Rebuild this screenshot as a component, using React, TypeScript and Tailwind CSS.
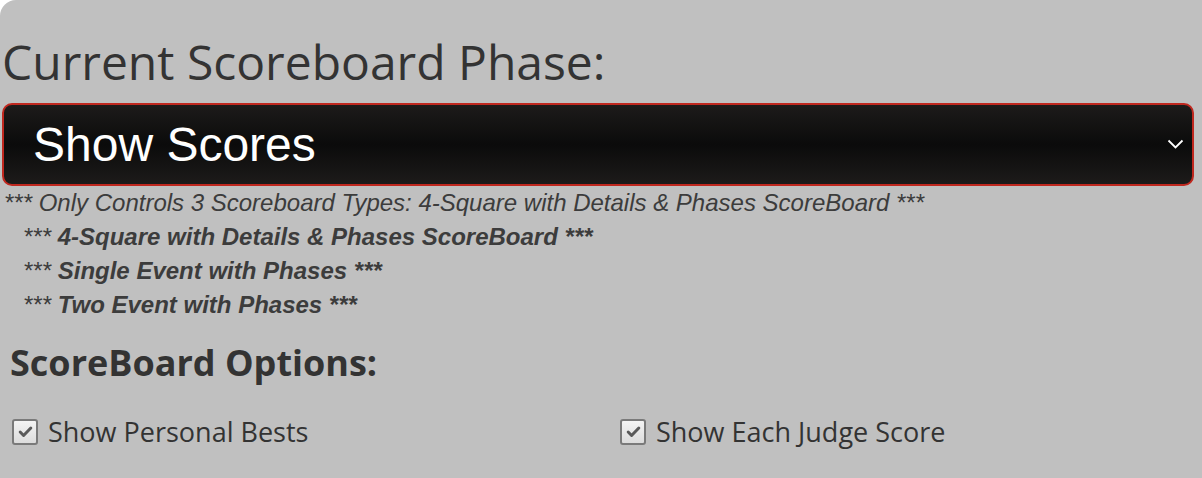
import React from "react";

function Check({ label }: { label: string }) {
  return (
    <label className="flex items-center gap-[10px]">
      <span className="flex h-[26px] w-[26px] items-center justify-center rounded-[3px] border-2 border-[#7a7a7a] bg-linear-to-b from-[#f4f4f4] to-[#dcdcdc]">
        <svg viewBox="0 0 16 16" className="h-[17px] w-[17px]">
          <path d="M3 8.5l3.2 3.2 6.8-7" fill="none" stroke="#5a5a5a" strokeWidth="2.8" strokeLinecap="round" strokeLinejoin="round" />
        </svg>
      </span>
      <span className="text-[27px] leading-none text-[#333]">{label}</span>
    </label>
  );
}

export default function App() {
  return (
    <div className="h-[478px] w-[1202px] overflow-hidden bg-white">
      <div className="h-full w-full rounded-tl-[16px] bg-[#c0c0c0] pt-[34px] font-['Open_Sans',sans-serif]">
        <h1 className="pl-[2px] text-[48px] leading-[56px] text-[#333]">Current Scoreboard Phase:</h1>
        <div className="mx-[2px] mt-[13px] flex h-[83px] w-[1192px] items-center justify-between rounded-[10px] border-2 border-[#c0281f] bg-linear-to-b from-[#1d1b1a] via-[#0b0b0b] to-[#1d1b1a] pl-[29px] pr-[8px] font-['Liberation_Sans',Arial,sans-serif] text-[48px] text-white">
          <span>Show Scores</span>
          <svg width="17" height="11" viewBox="0 0 17 11" className="shrink-0">
            <path d="M1.5 1.5l7 7 7-7" fill="none" stroke="#fff" strokeWidth="1.8" />
          </svg>
        </div>
        <div className="font-['Liberation_Sans',Arial,sans-serif] text-[24px] italic leading-[34px] text-[#3c3c3c]">
          <p className="pl-[4px]">*** Only Controls 3 Scoreboard Types: 4-Square with Details &amp; Phases ScoreBoard ***</p>
          <div className="pl-[23px] font-bold">
            <p>
              <span className="font-normal">***</span> 4-Square with Details &amp; Phases ScoreBoard ***
            </p>
            <p>
              <span className="font-normal">***</span> Single Event with Phases ***
            </p>
            <p>
              <span className="font-normal">***</span> Two Event with Phases ***
            </p>
          </div>
        </div>
        <h2 className="mt-[21px] pl-[10px] text-[36px] font-bold leading-[40px] text-[#333]">ScoreBoard Options:</h2>
        <div className="mt-[35px] grid grid-cols-2 pl-[12px]">
          <Check label="Show Personal Bests" />
          <div className="pl-[13px]">
            <Check label="Show Each Judge Score" />
          </div>
        </div>
      </div>
    </div>
  );
}
